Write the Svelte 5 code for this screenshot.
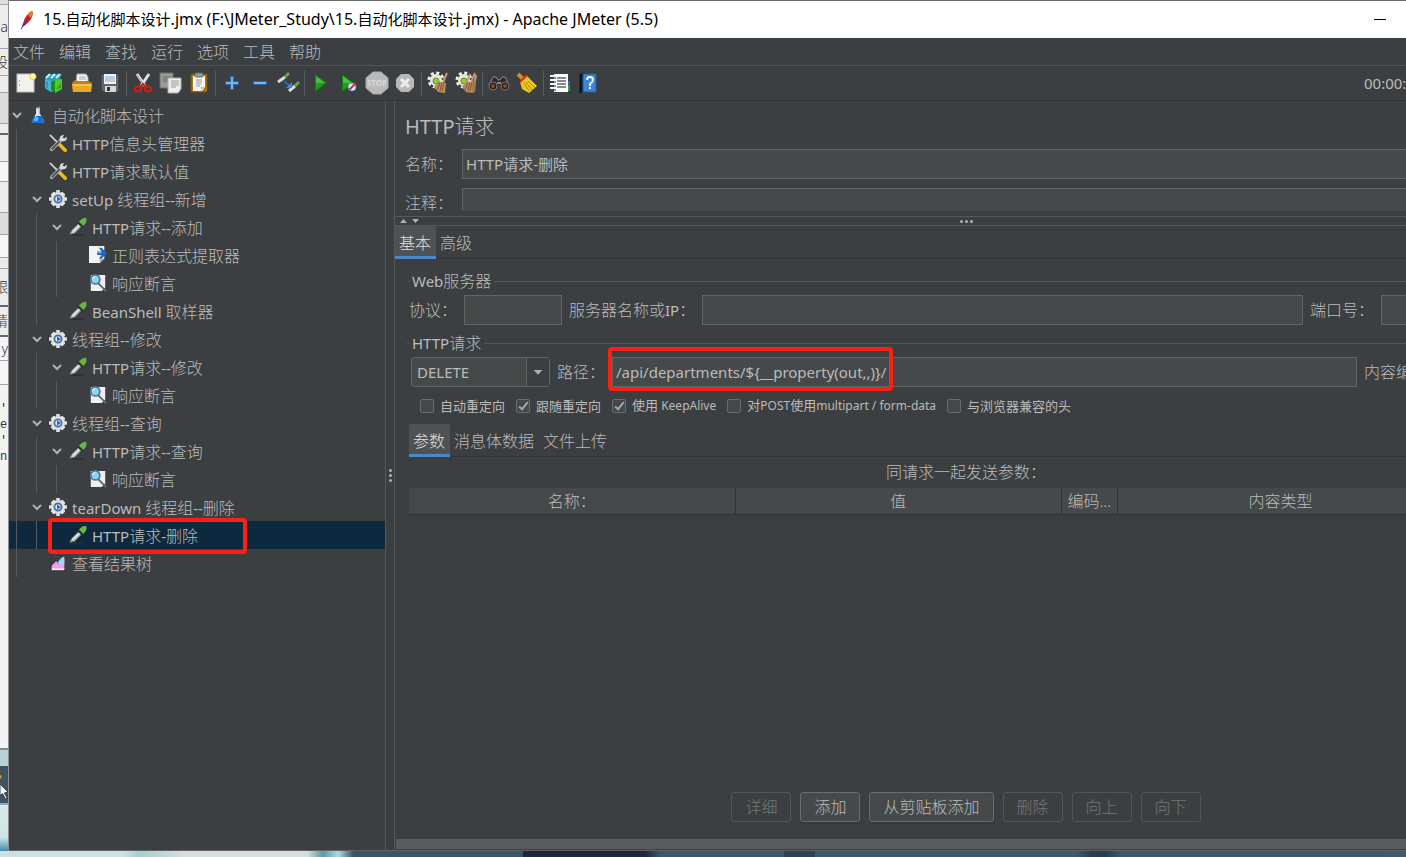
<script lang="ts">
    type Node = { depth: number; icon: string; text: string; open?: boolean; selected?: boolean };

    const menus = ['文件', '编辑', '查找', '运行', '选项', '工具', '帮助'];

    const tools = [
        [['new', '新建'], ['templates', '模板'], ['open', '打开'], ['save', '保存']],
        [['cut', '剪切'], ['copy', '复制'], ['paste', '粘贴']],
        [['plus', '展开'], ['minus', '折叠'], ['toggle', '切换']],
        [['start', '启动'], ['startnow', '不停顿启动'], ['stop', '停止'], ['shutdown', '关闭']],
        [['clear', '清除'], ['clearall', '清除全部']],
        [['search', '查找'], ['broom', '重置查找']],
        [['functions', '函数助手'], ['help', '帮助']],
    ];

    const nodes: Node[] = [
        { depth: 0, icon: 'flask', text: '自动化脚本设计', open: true },
        { depth: 1, icon: 'config', text: 'HTTP信息头管理器' },
        { depth: 1, icon: 'config', text: 'HTTP请求默认值' },
        { depth: 1, icon: 'gear', text: 'setUp 线程组--新增', open: true },
        { depth: 2, icon: 'dropper', text: 'HTTP请求--添加', open: true },
        { depth: 3, icon: 'extract', text: '正则表达式提取器' },
        { depth: 3, icon: 'assert', text: '响应断言' },
        { depth: 2, icon: 'dropper', text: 'BeanShell 取样器' },
        { depth: 1, icon: 'gear', text: '线程组--修改', open: true },
        { depth: 2, icon: 'dropper', text: 'HTTP请求--修改', open: true },
        { depth: 3, icon: 'assert', text: '响应断言' },
        { depth: 1, icon: 'gear', text: '线程组--查询', open: true },
        { depth: 2, icon: 'dropper', text: 'HTTP请求--查询', open: true },
        { depth: 3, icon: 'assert', text: '响应断言' },
        { depth: 1, icon: 'gear', text: 'tearDown 线程组--删除', open: true },
        { depth: 2, icon: 'dropper', text: 'HTTP请求-删除', selected: true },
        { depth: 1, icon: 'results', text: '查看结果树' },
    ];

    let options = $state([
        { text: '自动重定向', on: false },
        { text: '跟随重定向', on: true },
        { text: '使用 KeepAlive', on: true },
        { text: '对POST使用multipart / form-data', on: false },
        { text: '与浏览器兼容的头', on: false },
    ]);

    const actions = [
        { text: '详细', off: true },
        { text: '添加', off: false },
        { text: '从剪贴板添加', off: false },
        { text: '删除', off: true },
        { text: '向上', off: true },
        { text: '向下', off: true },
    ];

    // slices of the window that sits behind this one
    const behind = [
        { h: 5, t: '', c: 'grey' }, { h: 44, t: 'Ja', c: '' }, { h: 27, t: '设', c: '' }, { h: 17, t: '', c: '' },
        { h: 31, t: '', c: 'grey' }, { h: 11, t: '', c: 'dark' }, { h: 27, t: '', c: '' }, { h: 20, t: '', c: 'pale' },
        { h: 31, t: '', c: '' }, { h: 22, t: '', c: 'grey' }, { h: 23, t: '', c: 'pale' }, { h: 11, t: '', c: '' },
        { h: 38, t: '跟', c: 'dark' }, { h: 30, t: '请', c: 'dark' }, { h: 24, t: 'y', c: 'pale' }, { h: 24, t: '', c: 'pale' },
    ];
    const lines = ["':", 'e', "':", 'na'];

    let name = $state('HTTP请求-删除');
    let path = $state('/api/departments/${__property(out,,)}/');

    // Latin runs get their own size next to the Chinese around them
    const runs = (s: string) => s.split(/([\u3000-\u9fff\uff00-\uffef]+)/).filter(Boolean);
    const isLatin = (s: string) => s.charCodeAt(0) < 0x3000;
</script>

{#snippet mixed(s: string)}{#each runs(s) as r}{#if isLatin(r)}<span class="latin">{r}</span>{:else}{r}{/if}{/each}{/snippet}

{#snippet icon(kind: string)}
    <svg viewBox="0 0 20 20" aria-hidden="true">
        {#if kind === 'new'}
            <rect x="1" y="1" width="17" height="18" fill="#f2f2ee" stroke="#bfc0bc" />
            <path d="M3 8h1M3 12h1" stroke="#777" />
            <circle cx="17" cy="3.500" r="3" fill="#fff9a8" stroke="#e8cf3c" />
        {:else if kind === 'templates'}
            <path d="M1 4l4-3h13l-2 4v10l-8 4-7-4z" fill="#2a9db8" />
            <path d="M2 5l4-4M7 5l4-4M12 5l4-4" stroke="#c4eef5" stroke-width="2" />
            <path d="M1 6v9l6 4V8z" fill="#46b8cf" /><path d="M3 8v7" stroke="#1f7d95" />
            <path d="M7 9l5-2v12l-5-2z" fill="#1f9015" /><path d="M11 7l7-1v10l-7 4z" fill="#44cf26" />
            <path d="M12 16l5-6v5z" fill="#2ba51c" />
        {:else if kind === 'open'}
            <path d="M5 1h9l2 3v7H4z" fill="#f4f4f2" stroke="#aaa" /><path d="M7 4h7M7 6h7" stroke="#aaa" />
            <path d="M0 10l3-3 2 1h11l4 2-1 9H1z" fill="#c5820a" /><path d="M0 11h20l-1 8H1z" fill="#e7a92c" />
            <path d="M1 12h18" stroke="#ffdd86" />
        {:else if kind === 'save'}
            <path d="M1 1h18v18H3l-2-2z" fill="#5f6568" stroke="#34383a" />
            <rect x="4" y="1" width="12" height="10" fill="#edf3f8" /><path d="M5 4h10M5 6h10M5 8h10" stroke="#83abd0" />
            <rect x="5" y="13" width="11" height="6" fill="#d7d9d8" /><rect x="7" y="14" width="3" height="4" fill="#333" />
        {:else if kind === 'cut'}
            <path d="M4 1l8 12M16 1L8 13" stroke="#e2e2e0" stroke-width="3" /><path d="M4 2l7 10" stroke="#999" />
            <ellipse cx="5" cy="16" rx="3" ry="2.500" fill="none" stroke="#dc1616" stroke-width="2" />
            <ellipse cx="15" cy="16" rx="3" ry="2.500" fill="none" stroke="#dc1616" stroke-width="2" />
            <path d="M7 14l3-3 3 3" fill="none" stroke="#dc1616" stroke-width="2" />
        {:else if kind === 'copy'}
            <path d="M-1 0h13v15H-1z" fill="#999b99" stroke="#6c6e6c" /><path d="M2 4h8M2 6h8M2 8h5" stroke="#666" />
            <path d="M7 5h13v11l-3 4H7z" fill="#eeeeec" stroke="#aaa" /><path d="M10 8h8M10 10h8M10 12h8M10 14h5" stroke="#9a9a98" />
        {:else if kind === 'paste'}
            <rect x="2" y="1" width="16" height="18" rx="1" fill="#b37514" stroke="#7e4d08" />
            <path d="M4 3h12v11l-3 4H4z" fill="#f7f7f5" /><path d="M12 17v-3h4z" fill="#bbb" />
            <rect x="6" y="0" width="8" height="4" rx="1" fill="#9b9c98" stroke="#666" />
            <path d="M7 7h6M7 9h6M7 11h5M7 13h4" stroke="#999" />
        {:else if kind === 'plus'}
            <path d="M10 3v14M3 10h14" stroke="#2c64a8" stroke-width="4" /><path d="M10 4v12M4 10h12" stroke="#7ab4f0" stroke-width="2" />
        {:else if kind === 'minus'}
            <path d="M3 10h14" stroke="#2c64a8" stroke-width="4" /><path d="M4 10h12" stroke="#7ab4f0" stroke-width="2" />
        {:else if kind === 'toggle'}
            <path d="M0 9l7-5M11 18l6-5" stroke="#d9dbd6" stroke-width="3" /><path d="M7 4l4-4M17 13l4-4" stroke="#62a746" stroke-width="3" />
            <path d="M6 8l6 5" stroke="#2468bd" stroke-width="2" /><path d="M14 9v6H8z" fill="#3e86df" />
        {:else if kind === 'start'}
            <path d="M4 1l12 9-12 9z" fill="#14820f" /><path d="M5 3l9 7H5z" fill="#48bf42" /><path d="M5 10h9l-9 7z" fill="#1f9d1b" />
        {:else if kind === 'startnow'}
            <path d="M3 1l12 9-12 9z" fill="#14820f" /><path d="M4 3l9 7H4z" fill="#48bf42" /><path d="M4 10h9l-9 7z" fill="#1f9d1b" />
            <circle cx="13" cy="14" r="4" fill="#e9f0fa" stroke="#5b8fcf" /><path d="M10 17l6-6" stroke="#d62620" stroke-width="2" />
        {:else if kind === 'stop'}
            <path d="M6-1h8l7 6v10l-7 6H6l-7-6V5z" fill="#bababa" stroke="#a8a8a8" />
            <text x="10" y="13" text-anchor="middle" font-size="8" font-weight="700" fill="#d8d8d8">STOP</text>
        {:else if kind === 'shutdown'}
            <path d="M6 1h8l5 5v8l-5 5H6l-5-5V6z" fill="#b8b8b8" /><path d="M6 6l8 8M14 6l-8 8" stroke="#ededed" stroke-width="3" />
        {:else if kind === 'clear' || kind === 'clearall'}
            <circle cx="8" cy="7" r="7" fill="none" stroke="#f0f0ee" stroke-width="3" stroke-dasharray="3 2.500" />
            <circle cx="8" cy="7" r="6" fill="#e4e4e2" />
            <circle cx="8" cy="8" r="3" fill="#8fce3a" stroke="#55951e" />
            <path d="M19 0l-4 9" stroke="#c69b6c" stroke-width="2" />
            <path d="M10 9l8 1-1 10-7-1-4-5z" fill="#b98c5f" /><path d="M12 9l-3 8M14 9l-2 9M16 9l-2 9" stroke="#7f5b38" />
            {#if kind === 'clearall'}<path d="M14 1l-3 8M20 2l-3 17" stroke="#c69b6c" stroke-width="2" /><path d="M16 8l4 0-1 11-3 0z" fill="#a87a4c" />{/if}
        {:else if kind === 'search'}
            <path d="M0 12l4-8h3l2 3h2l2-3h3l4 8" fill="#292b2c" stroke="#8d9092" />
            <circle cx="4" cy="13" r="4" fill="#2b1c17" stroke="#777" /><circle cx="16" cy="13" r="4" fill="#2b1c17" stroke="#777" />
            <circle cx="4" cy="13" r="2" fill="#8e4a2b" /><circle cx="16" cy="13" r="2" fill="#8e4a2b" /><path d="M8 10h4" stroke="#888" stroke-width="2" />
        {:else if kind === 'broom'}
            <path d="M1 1l6 6" stroke="#cd8b29" stroke-width="4" /><path d="M3 9l7-6 10 10-8 7-7-4z" fill="#edc91d" />
            <path d="M7 10l5 8M9 9l6 8M11 8l7 7" stroke="#a98707" /><path d="M3 9l7-7" stroke="#d92b19" stroke-width="2" />
        {:else if kind === 'functions'}
            <path d="M17 8h3v5h-3z" fill="#2869c5" /><path d="M17 13h3v5h-3z" fill="#2da52f" />
            <rect x="4" y="1" width="14" height="18" fill="#fafafa" /><path d="M7 5h9M7 8h9M7 11h9M7 14h9" stroke="#16191b" />
            <path d="M0 3h5M0 7h5M0 11h5M0 15h5" stroke="#f2f2f2" stroke-width="2" /><path d="M5 4v14" stroke="#222" stroke-dasharray="2 2" />
        {:else if kind === 'help'}
            <path d="M2 2l3-2v18l-3 2z" fill="#121a22" stroke="#071018" /><rect x="5" y="1" width="13" height="18" fill="#3f85d6" stroke="#265b9c" />
            <path d="M9 7q0-3 3-3t3 3q0 2-3 4v2M12 14v2" fill="none" stroke="#f0f7ff" stroke-width="2" />
        {:else if kind === 'flask'}
            <path d="M8 2h4v6l5 9q0 2-2 2H5q-2 0-2-2l5-9z" fill="#d5dade" /><path d="M6 11h8l3 6q0 2-2 2H5q-2 0-2-2z" fill="#146fd4" />
            <path d="M6 13q0 3-1 4h4q2-3 1-5z" fill="#6db4f5" />
            <path d="M8 2h4M11 1l2-2" stroke="#848b90" /><path d="M9 3v6l-2 3" fill="none" stroke="#fff" />
        {:else if kind === 'config'}
            <path d="M1 1l11 11" stroke="#d0d2d0" stroke-width="2" /><path d="M12 12l6 6" stroke="#f2ba15" stroke-width="4" stroke-linecap="round" />
            <path d="M3 17L14 6" stroke="#b2b5b4" stroke-width="4" stroke-linecap="round" /><path d="M3 17L12 8" stroke="#4a4d4e" stroke-width="2" />
            <path d="M12 7q-1-6 5-6l-2 3 2 1 3-2q0 6-6 5z" fill="#d8dad9" />
        {:else if kind === 'gear'}
            <path d="M8 0h4v3l3-1 3 3-1 3h3v4h-3l1 3-3 3-3-1v3H8v-3l-3 1-3-3 1-3H0V8h3L2 5l3-3 3 1z" fill="#dfe2e4" />
            <circle cx="10" cy="10" r="7" fill="#dfe2e4" /><circle cx="10" cy="10" r="4" fill="#dfeaf8" stroke="#4a6fa6" stroke-width="2" />
            <path d="M9 7l4 3-4 3z" fill="#245bad" />
        {:else if kind === 'dropper'}
            <ellipse cx="9" cy="19" rx="8" ry="1" fill="#2b2d2e" />
            <path d="M1 18l2-4 8-8 3 3-8 8z" fill="#c8cdce" stroke="#73797b" /><path d="M4 15l8-8" stroke="#fff" />
            <path d="M10 5l5 5" stroke="#253b1b" stroke-width="2" /><path d="M11 4q4-5 8-4 2 4-3 9z" fill="#69b24d" />
        {:else if kind === 'extract'}
            <path d="M0 0h17v14l-5 5H0z" fill="#f1f3f5" /><path d="M12 19v-5h5z" fill="#a5a8aa" />
            <path d="M9 6h5l-3-4h3l6 6-6 6h-3l3-4H9z" fill="#1c66c4" /><path d="M9 6h5v2H9z" fill="#7eaee6" />
        {:else if kind === 'assert'}
            <path d="M2 1h16v14l-4 4H2z" fill="#eef0f0" /><path d="M10 10l9 9" stroke="#646a6c" stroke-width="2" />
            <circle cx="7" cy="6" r="5" fill="#8cd2f5" stroke="#547b9c" stroke-width="2" /><path d="M4 6q0-3 3-3" fill="none" stroke="#fff" />
        {:else}
            <path d="M2 0v18h17" fill="none" stroke="#24272a" stroke-dasharray="2 2" />
            <path d="M3 17v-4l5-5 3 3 6-6v12z" fill="#f39bea" /><path d="M10 9q4-6 7-6v9q-6 2-7-3z" fill="#a8d0f7" />
            <path d="M3 17h14" stroke="#ffe2fa" stroke-width="2" />
        {/if}
    </svg>
{/snippet}

<div class="desktop">
    <div class="behind" aria-hidden="true">
        {#each behind as s}
            <div class="slice {s.c}" style:height="{s.h}px">{s.t}</div>
        {/each}
        <div class="code">
            {#each lines as l}<span>{l}</span>{/each}
        </div>
        <div class="taskbar">
            <svg viewBox="0 0 9 36"><circle cx="0" cy="10" r="2" fill="#d08b33" /><path d="M0 18l9 9-4 1 3 6-2 1-3-6-3 2z" fill="#f2f4f6" stroke="#30363c" /></svg>
        </div>
        <div class="wall"></div>
    </div>

    <div class="window">
        <header class="titlebar">
            <svg class="feather" viewBox="0 0 18 20" aria-hidden="true">
                <path d="M12 2q3-2 3 1-1 8-8 12l-2 1q0-8 7-14z" fill="#cf2333" /><path d="M12 2q3-2 3 1l-2 5-3-3z" fill="#ee7a25" />
                <path d="M5 13l3 1-2 2-2 1z" fill="#6c2474" /><path d="M3 19l7-11" stroke="#5b2a5f" />
            </svg>
            <span class="title">{@render mixed('15.自动化脚本设计.jmx (F:\\JMeter_Study\\15.自动化脚本设计.jmx) - Apache JMeter (5.5)')}</span>
            <button type="button" class="minimize" aria-label="最小化"></button>
        </header>

        <nav class="menubar">
            {#each menus as m}<button type="button">{m}</button>{/each}
        </nav>

        <div class="toolbar" role="toolbar">
            {#each tools as group, i}
                {#if i}<span class="sep"></span>{/if}
                {#each group as [kind, label]}
                    <button type="button" aria-label={label}>{@render icon(kind)}</button>
                {/each}
            {/each}
            <span class="clock">00:00:00</span>
        </div>

        <div class="main">
            <div class="tree" role="tree">
                {#each nodes as n}
                    <div class="node" class:selected={n.selected} role="treeitem" tabindex="-1" aria-selected={!!n.selected}>
                        {#each { length: n.depth } as _}<span class="guide"></span>{/each}
                        <span class="chevron">
                            {#if n.open}<svg viewBox="0 0 14 10" aria-hidden="true"><path d="M3 3l4 4 4-4" /></svg>{/if}
                        </span>
                        <span class="glyph">{@render icon(n.icon)}</span>
                        <span class="name">{@render mixed(n.text)}</span>
                        {#if n.selected}<span class="mark"></span>{/if}
                    </div>
                {/each}
            </div>

            <div class="divider"><i></i><i></i><i></i></div>

            <div class="editor">
                <section class="head">
                    <h1>{@render mixed('HTTP请求')}</h1>
                    <div class="line">
                        <label for="name">名称：</label>
                        <input id="name" class="grow" bind:value={name} />
                    </div>
                    <div class="line cut">
                        <label for="comment">注释：</label>
                        <input id="comment" class="grow" />
                    </div>
                </section>

                <div class="split">
                    <svg viewBox="0 0 20 6" aria-hidden="true"><path d="M0 5h7L3.500 1zM12 1h7l-3.500 4z" fill="#afb1b3" /></svg>
                    <div class="dots"><i></i><i></i><i></i></div>
                </div>

                <div class="tabs" role="tablist">
                    <button type="button" role="tab" class="on" aria-selected="true">基本</button>
                    <button type="button" role="tab" aria-selected="false">高级</button>
                </div>

                <div class="body">
                    <fieldset>
                        <legend>{@render mixed('Web服务器')}</legend>
                        <div class="row">
                            <label for="protocol">协议：</label>
                            <input id="protocol" class="short" />
                            <label for="server">{@render mixed('服务器名称或IP：')}</label>
                            <input id="server" class="grow" />
                            <label for="port">端口号：</label>
                            <input id="port" class="port" />
                        </div>
                    </fieldset>

                    <fieldset>
                        <legend>{@render mixed('HTTP请求')}</legend>
                        <div class="row">
                            <div class="select">
                                <select aria-label="方法">
                                    <option>DELETE</option>
                                    <option>GET</option>
                                    <option>POST</option>
                                    <option>PUT</option>
                                </select>
                                <svg viewBox="0 0 23 28" aria-hidden="true"><path d="M7 12h9l-4.500 5z" fill="#afb1b3" /></svg>
                            </div>
                            <label for="path">路径：</label>
                            <div class="path grow">
                                <input id="path" bind:value={path} />
                                <span class="mark"></span>
                            </div>
                            <label for="encoding">内容编码：</label>
                            <input id="encoding" class="enc" />
                        </div>
                        <div class="checks">
                            {#each options as o}
                                <label><input type="checkbox" bind:checked={o.on} /><span>{@render mixed(o.text)}</span></label>
                            {/each}
                        </div>
                    </fieldset>

                    <div class="tabs" role="tablist">
                        <button type="button" role="tab" class="on" aria-selected="true">参数</button>
                        <button type="button" role="tab" aria-selected="false">消息体数据</button>
                        <button type="button" role="tab" aria-selected="false">文件上传</button>
                    </div>

                    <table>
                        <caption>同请求一起发送参数：</caption>
                        <thead>
                            <tr><th>名称：</th><th>值</th><th class="narrow">编码...</th><th>内容类型</th><th class="last"></th></tr>
                        </thead>
                    </table>

                    <div class="actions">
                        {#each actions as a}<button type="button" disabled={a.off}>{a.text}</button>{/each}
                    </div>
                </div>
                <div class="scrollbar"></div>
            </div>
        </div>
    </div>

    <div class="floor"></div>
</div>

<style>
    :global(body) { margin: 0; overflow: hidden; }
    .desktop {
        --bg: #3c3f41; --field: #45494a; --edge: #646464; --line: #555759; --text: #bbbbbb; --blue: #4a88c7;
        display: grid; grid-template-columns: 9px 1fr; grid-template-rows: 1fr 6px;
        height: 100vh; overflow: hidden; background: #b9d2d6;
        font-family: "Noto Sans", "Noto Sans CJK SC", sans-serif; font-size: 16px; font-weight: 300; line-height: 22px; color: var(--text);
    }
    button, input, select { font: inherit; color: inherit; box-sizing: border-box; margin: 0; }
    button { background: none; border: none; padding: 0; white-space: nowrap; }
    .latin { font-size: 15px; font-weight: 400; }
    .mark { position: absolute; box-sizing: border-box; border: 4px solid #ff1f14; border-radius: 4px; pointer-events: none; }

    /* background window and desktop */
    .behind { display: flex; flex-direction: column; overflow: hidden; box-sizing: border-box; border-right: 1px solid #8c8e8f; color: #333; font-size: 14px; }
    .slice { flex: none; box-sizing: border-box; border-bottom: 1px solid #a4a4a4; background: #ececec; overflow: hidden; display: flex; align-items: center; justify-content: flex-end; }
    .slice.grey { background: #dcdcdc; }
    .slice.pale { background: #f6f6f6; }
    .slice.dark { border-bottom: 2px solid #686868; }
    .code { flex: 1; padding-top: 16px; background: #f3f3f3; border-bottom: 2px solid #888; font: 12px/16px "Liberation Mono", monospace; }
    .code span { display: block; }
    .taskbar { flex: none; height: 37px; margin-top: 16px; background: #43525f; border-bottom: 2px solid #74aeda; }
    .taskbar svg { display: block; width: 8px; height: 36px; }
    .wall { flex: none; height: 46px; background: linear-gradient(#d9e8e8, #cfe4e6 70%, #3e8fb0); }
    .floor {
        grid-column: 1 / 3;
        background: linear-gradient(90deg, #cfe0e2 0 8%, #a5cfd1 9%, #d3dedd 12% 20%, #5f97a6 21%, #a8dbe4 22%, #3b5568 23% 34%, #1e2740 34% 42%, #3c586c 43% 51%, #2a4356 51% 53%, #3d5b70 53% 70%, #263e52 71% 72%, #3d5a6e 73% 90%, #56757f);
    }

    /* the window runs past the right edge of the screen */
    .window { display: flex; flex-direction: column; width: calc(100vw + 122px); min-height: 0; box-sizing: border-box; background: var(--bg); border-top: 1px solid #6b6b6b; border-bottom: 1px solid #606263; }
    .titlebar { flex: none; display: flex; align-items: center; height: 37px; padding: 0 12px 0 9px; background: #fff; color: #000; font-size: 15px; font-weight: 400; }
    .titlebar .latin { font-size: 16px; }
    .feather { width: 18px; height: 20px; margin-right: 7px; }
    .title { white-space: nowrap; line-height: 20px; padding-bottom: 2px; }
    .minimize { width: 174px; height: 37px; margin-left: auto; padding-left: 23px; }
    .minimize::before { content: ""; display: block; width: 12px; height: 1px; background: #000; }
    .menubar { flex: none; display: flex; gap: 14px; height: 27px; padding-left: 4px; border-bottom: 1px solid #515355; }
    .toolbar { flex: none; display: flex; align-items: center; height: 34px; padding-left: 3px; border-bottom: 1px solid #323537; }
    .toolbar button { width: 28px; height: 28px; display: grid; place-items: center; }
    .toolbar svg { width: 20px; height: 20px; overflow: visible; }
    .sep { box-sizing: border-box; width: 5px; height: 25px; border-left: 2px solid var(--bg); border-right: 2px solid var(--bg); background: #5a5d5f; }
    .clock { margin-left: auto; width: 173px; font-size: 15px; font-weight: 400; }
    .main { flex: 1; min-height: 0; display: flex; }

    .tree { flex: none; width: 376px; white-space: nowrap; }
    .node { position: relative; display: flex; align-items: center; height: 28px; padding-left: 1px; }
    .node.selected { background: #0d293e; }
    .node .mark { left: 39px; top: -3px; width: 199px; height: 36px; }
    .guide { box-sizing: border-box; width: 14px; height: 28px; margin-left: 6px; border-left: 1px solid #555a5d; }
    .chevron { width: 19px; height: 10px; }
    .chevron svg { display: block; width: 14px; height: 10px; }
    .chevron path { fill: none; stroke: #afb1b3; stroke-width: 2; }
    .glyph { width: 18px; height: 18px; margin-right: 5px; }
    .glyph svg { display: block; width: 18px; height: 18px; }
    .name { padding-top: 2px; }

    .divider { flex: none; display: flex; flex-direction: column; align-items: center; justify-content: center; gap: 2px; box-sizing: border-box; width: 10px; border-left: 1px solid var(--line); border-right: 1px solid var(--line); }
    .divider i, .dots i { width: 3px; height: 3px; border-radius: 50%; background: #afb1b3; }

    .editor { flex: 1; min-width: 0; display: flex; flex-direction: column; }
    .head { padding: 12px 14px 5px 10px; }
    h1 { margin: 0 0 8px; font-size: 20px; line-height: 28px; font-weight: 300; }
    h1 .latin { font-size: 20px; }
    .line { display: flex; align-items: flex-start; gap: 9px; line-height: 30px; margin-bottom: 9px; }
    .line.cut { height: 23px; overflow: hidden; margin-bottom: 0; }
    label { white-space: nowrap; }
    input:not([type="checkbox"]) { height: 30px; min-width: 0; padding: 0 3px; background: var(--field); border: 1px solid var(--edge); font-size: 15px; font-weight: 400; outline: none; }
    .grow { flex: 1; min-width: 0; }
    .split { display: flex; align-items: center; box-sizing: border-box; height: 10px; border-top: 1px solid var(--line); border-bottom: 1px solid var(--line); }
    .split svg { width: 20px; height: 6px; margin-left: 5px; }
    .dots { flex: 1; display: flex; justify-content: center; gap: 2px; padding-right: 25px; }

    .tabs { flex: none; display: flex; box-sizing: border-box; height: 33px; border-bottom: 1px solid #323537; }
    .tabs button { height: 33px; padding: 3px 5px 0 4px; border-bottom: 3px solid transparent; }
    .tabs .on { background: #4e5254; border-color: var(--blue); color: #e0e0e0; }

    .body { flex: 1; display: flex; flex-direction: column; padding: 11px 14px 0; }
    fieldset { min-width: 0; margin: 0 0 7px -2px; padding: 3px 0 0 2px; border: 0; border-top: 1px solid var(--line); }
    legend { margin-left: 0; padding: 0 3px; }
    .row { display: flex; align-items: center; gap: 7px; height: 30px; }
    .short { width: 98px; }
    .port { width: 142px; }
    .enc { width: 72px; }
    .select { position: relative; width: 139px; height: 30px; margin-left: 2px; }
    select { width: 100%; height: 30px; padding: 0 5px; appearance: none; background: var(--field); border: 1px solid var(--edge); border-radius: 3px; font-size: 15px; font-weight: 400; }
    .select svg { position: absolute; top: 1px; right: 1px; width: 22px; height: 28px; border-left: 1px solid var(--edge); background: var(--bg); pointer-events: none; }
    .path { position: relative; }
    .path input { display: block; width: 100%; }
    .path .mark { left: -4px; top: -10px; width: 285px; height: 44px; }
    .checks { display: flex; gap: 11px; margin-top: 7px; padding-left: 11px; font-size: 13px; font-weight: 400; }
    .checks label { display: flex; align-items: center; gap: 6px; }
    .checks .latin { font-size: 12px; }
    .checks input { appearance: none; display: grid; place-items: center; width: 14px; height: 14px; border: 1px solid #6b6b6b; border-radius: 2px; background: #43494a; }
    .checks input:checked::before { content: ""; width: 3px; height: 8px; margin-bottom: 3px; border: solid #a7a7a7; border-width: 0 2px 2px 0; transform: rotate(40deg); }

    table { table-layout: fixed; width: 100%; border-collapse: collapse; }
    caption { height: 31px; line-height: 31px; }
    th { box-sizing: border-box; height: 26px; padding: 0; font-weight: 300; white-space: nowrap; background: #45494b; border-right: 1px solid #323537; border-bottom: 1px solid #323537; }
    th.narrow { width: 56px; }
    th.last { width: 79px; }
    .actions { display: flex; justify-content: center; gap: 9px; margin: auto 0 17px; }
    .actions button { height: 30px; padding: 0 13px; border: 1px solid #6a6c6d; border-radius: 3px; background: var(--field); box-shadow: 0 1px 1px #313435; }
    .actions button:disabled { background: none; border-color: #525456; color: #777777; box-shadow: none; }
    .scrollbar { height: 10px; margin: 0 0 1px 1px; background: #5a5b5c; }
</style>
